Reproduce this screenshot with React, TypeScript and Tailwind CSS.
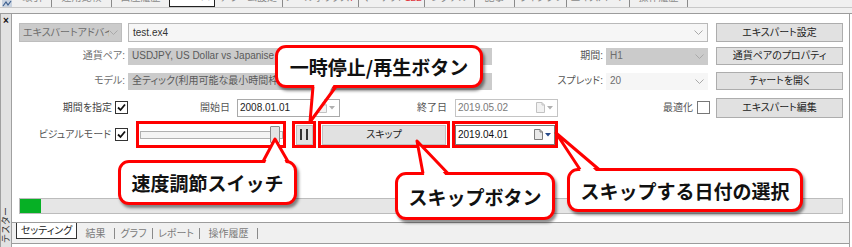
import React from 'react';

const Chevron = () => (
  <svg width="9" height="5" viewBox="0 0 9 5" className="shrink-0">
    <polyline points="0.5,0.5 4.5,4.5 8.5,0.5" fill="none" stroke="#a9a9a9" strokeWidth="1" />
  </svg>
);

const Check = ({ on }: { on: boolean }) => (
  <div className="w-[13px] h-[13px] shrink-0 border border-[#333] bg-white flex items-center justify-center">
    {on && (
      <svg width="9" height="9" viewBox="0 0 9 9">
        <path d="M1 4.5 L3.5 7 L8 1.5" fill="none" stroke="#111" strokeWidth="1.8" />
      </svg>
    )}
  </div>
);

const Calendar = ({ active }: { active: boolean }) => (
  <div className="flex items-center gap-[2px] shrink-0">
    <svg width="9" height="11" viewBox="0 0 9 11">
      <path
        d="M0.5 0.5 H6 L8.5 3 V10.5 H0.5 Z"
        fill={active ? '#e9e9e9' : '#f2f2f2'}
        stroke={active ? '#7d7d7d' : '#c2c2c2'}
      />
      <path d="M6 0.5 V3 H8.5" fill="none" stroke={active ? '#7d7d7d' : '#c2c2c2'} />
    </svg>
    <svg width="6" height="4" viewBox="0 0 6 4">
      <path d="M0 0 H6 L3 3.5 Z" fill={active ? '#274a8a' : '#b0b0b0'} />
    </svg>
  </div>
);

const Btn = ({ label, h }: { label: string; h: string }) => (
  <div className={`ml-[8px] w-[127px] ${h} shrink-0 bg-[#e1e1e1] border border-[#adadad] flex items-center justify-center text-[#222]`}>
    {label}
  </div>
);

const topTabs = [
  { label: '取引', w: 'w-[38px]', sep: true },
  { label: '運用比較', w: 'w-[60px]', sep: true },
  { label: '口座履歴', w: 'w-[57px]', sep: false },
  { label: 'ニュース', w: 'w-[46px]', sep: false, active: true },
  { label: 'アラーム設定', w: 'w-[68px]', sep: true },
  { label: 'メールボックス', w: 'w-[76px]', sep: true, badge: '7' },
  { label: 'マーケット', w: 'w-[66px]', sep: true, badge: '122' },
  { label: 'シグナル', w: 'w-[50px]', sep: true },
  { label: '記事', w: 'w-[40px]', sep: true },
  { label: 'ライブラリ', w: 'w-[52px]', sep: true },
  { label: 'エキスパート', w: 'w-[63px]', sep: true },
  { label: '操作履歴', w: 'w-[58px]', sep: true },
];

const bottomTabs = [
  { label: '結果', w: 'w-[38px]' },
  { label: 'グラフ', w: 'w-[38px]' },
  { label: 'レポート', w: 'w-[47px]' },
  { label: '操作履歴', w: 'w-[58px]' },
];

type P = [number, number];
const tails: { l: P; t: P; r: P; dy: number }[] = [
  { l: [313, 86.5], t: [310, 122], r: [336, 86.5], dy: -3 },
  { l: [263, 161.5], t: [275, 139], r: [288, 161.5], dy: 3 },
  { l: [423, 173.5], t: [417, 141], r: [448, 173.5], dy: 3 },
  { l: [580, 169.5], t: [556, 133], r: [599, 169.5], dy: 3 },
];

const callout =
  "absolute rounded-[11px] border-[3px] border-[#ff0000] bg-white shadow-[2px_3px_3px_rgba(0,0,0,0.45)] flex items-center justify-center text-[19px] font-bold text-[#111] font-['Noto_Sans_CJK_JP',sans-serif] [font-feature-settings:normal] whitespace-nowrap";

export default function App() {
  return (
    <div className="relative w-[852px] h-[247px] overflow-hidden bg-white text-[10px] leading-none text-[#333] font-['Liberation_Sans','Noto_Sans_CJK_JP',sans-serif] [font-feature-settings:'palt']">
      {/* terminal tabs above, cut off */}
      <div className="h-[14px] bg-[#f0f0f0] border-b border-[#9c9c9c]">
        <div className="h-[8px] flex items-end overflow-hidden border-b border-[#c8c8c8]">
          <div className="w-[14px] h-[8px] flex items-end pl-[2px]">
            <svg width="10" height="7" viewBox="0 0 10 7">
              <rect x="0" y="0" width="10" height="7" fill="#c9d3e0" />
              <polyline points="1,6 4,2 6,5 9,1" fill="none" stroke="#3d5f8f" strokeWidth="1.2" />
            </svg>
          </div>
          {topTabs.map((t) => (
            <div
              key={t.label}
              className={`${t.w} h-[8px] shrink-0 flex items-end justify-center overflow-hidden ${
                t.active ? 'bg-white border-x border-b border-[#222] text-[#222]' : t.sep ? 'border-r border-[#8a8a8a] text-[#8a8a8a]' : 'text-[#8a8a8a]'
              }`}
            >
              <span className="whitespace-nowrap leading-[10px] mb-[4px]">
                {t.label}
                {t.badge && <span className="text-[#e0303a]">{t.badge}</span>}
              </span>
            </div>
          ))}
        </div>
      </div>

      <div className="flex h-[233px]">
        {/* side bar */}
        <div className="w-[12px] shrink-0 bg-[#e2e2e2] border-x border-[#a0a0a0] flex flex-col items-center justify-between">
          <span className="mt-[2px] text-[10px] font-bold text-[#111]">×</span>
          <span className="mb-[4px] text-[9px] text-[#333] [writing-mode:vertical-rl] [text-orientation:sideways] rotate-180 [font-feature-settings:normal]">
            テスター
          </span>
        </div>

        <div className="flex-1 mr-[2px] border-r border-[#a0a0a0] flex flex-col pt-[8px]">
          {/* row 1 */}
          <div className="h-[21px] flex items-center">
            <div className="ml-[7px] w-[103px] h-[19px] shrink-0 bg-[#cbcbcb] border border-[#bdbdbd] flex items-center justify-between pl-[3px] pr-[3px] text-[#6d6d6d] overflow-hidden">
              <span className="whitespace-nowrap overflow-hidden w-[86px]">エキスパートアドバイザ</span>
              <Chevron />
            </div>
            <div className="ml-[6px] w-[580px] h-[19px] shrink-0 bg-[#f6f6f6] border border-[#b9b9b9] flex items-center justify-between px-[4px] text-[#333]">
              <span>test.ex4</span>
              <Chevron />
            </div>
            <Btn label="エキスパート設定" h="h-[19px]" />
          </div>

          {/* row 2 */}
          <div className="mt-[3px] h-[20px] flex items-center">
            <div className="w-[116px] shrink-0 text-right pr-[3px] text-[#6d6d6d]">通貨ペア:</div>
            <div className="w-[364px] h-[17px] shrink-0 bg-[#cbcbcb] flex items-center px-[4px] text-[#5a5a5a] whitespace-nowrap overflow-hidden">
              USDJPY, US Dollar vs Japanise Yen
            </div>
            <div className="w-[114px] shrink-0 text-right pr-[3px] text-[#555]">期間:</div>
            <div className="w-[102px] h-[17px] shrink-0 bg-[#cbcbcb] flex items-center justify-between px-[4px] text-[#6d6d6d]">
              <span>H1</span>
              <Chevron />
            </div>
            <Btn label="通貨ペアのプロパティ" h="h-[18px]" />
          </div>

          {/* row 3 */}
          <div className="mt-[5px] h-[20px] flex items-center">
            <div className="w-[116px] shrink-0 text-right pr-[3px] text-[#6d6d6d]">モデル:</div>
            <div className="w-[364px] h-[17px] shrink-0 bg-[#cbcbcb] flex items-center px-[4px] text-[#5a5a5a] whitespace-nowrap overflow-hidden">
              全ティック(利用可能な最小時間枠を使った最も正確な方法)
            </div>
            <div className="w-[114px] shrink-0 text-right pr-[3px] text-[#555]">スプレッド:</div>
            <div className="w-[102px] h-[17px] shrink-0 bg-[#f6f6f6] flex items-center justify-between px-[4px] text-[#6d6d6d]">
              <span>20</span>
              <Chevron />
            </div>
            <Btn label="チャートを開く" h="h-[18px]" />
          </div>

          {/* row 4 */}
          <div className="mt-[6px] h-[21px] flex items-center">
            <div className="w-[103px] shrink-0 text-right pr-[3px] text-[#444]">期間を指定</div>
            <Check on />
            <div className="w-[109px] shrink-0 text-right pr-[7px] text-[#555]">開始日</div>
            <div className="w-[103px] h-[18px] shrink-0 bg-white border border-[#a9a9a9] flex items-center justify-between pl-[2px] pr-[4px] text-[#222]">
              <span>2008.01.01</span>
              <Calendar active={false} />
            </div>
            <div className="w-[115px] shrink-0 text-right pr-[8px] text-[#555]">終了日</div>
            <div className="w-[103px] h-[18px] shrink-0 bg-white border border-[#c4c4c4] flex items-center justify-between pl-[2px] pr-[4px] text-[#7a7a7a]">
              <span>2019.05.02</span>
              <Calendar active={false} />
            </div>
            <div className="w-[139px] shrink-0 text-right pr-[4px] text-[#555]">最適化</div>
            <div className="w-[13px] h-[13px] shrink-0 border border-[#777] bg-white" />
            <div className="ml-[6px] w-[127px] h-[20px] shrink-0 bg-[#e1e1e1] border border-[#adadad] flex items-center justify-center text-[#222]">
              エキスパート編集
            </div>
          </div>

          {/* row 5 */}
          <div className="mt-[2px] h-[29px] flex items-center">
            <div className="w-[101px] shrink-0 text-right pr-[2px] text-[#555]">ビジュアルモード</div>
            <div className="ml-[2px]">
              <Check on />
            </div>
            <div className="ml-[8px] w-[150px] h-[27px] shrink-0 border-[3px] border-[#ff0000] flex items-center pl-[1px]">
              <div className="w-[130px] h-[8px] border-y border-l border-[#b0b0b0] bg-[#f4f4f4]" />
              <div className="w-[10px] h-[17px] bg-[#e4e4e4] border border-[#8a8a8a] rounded-[1px]" />
              <div className="w-[3px] h-[8px] border-y border-r border-[#b0b0b0] bg-[#f4f4f4]" />
            </div>
            <div className="ml-[6px] w-[24px] h-[27px] shrink-0 border-[3px] border-[#ff0000] flex items-center justify-center">
              <div className="w-[17px] h-[20px] bg-[#e1e1e1] border border-[#c0c0c0] flex items-center justify-center gap-[4px]">
                <div className="w-[2px] h-[11px] bg-[#333]" />
                <div className="w-[2px] h-[11px] bg-[#333]" />
              </div>
            </div>
            <div className="ml-[2px] w-[132px] h-[27px] shrink-0 border-[3px] border-[#ff0000] flex items-center justify-center">
              <div className="w-[124px] h-[20px] bg-[#e1e1e1] border border-[#c0c0c0] flex items-center justify-center text-[#222]">
                スキップ
              </div>
            </div>
            <div className="ml-[2px] w-[106px] h-[27px] shrink-0 border-[3px] border-[#ff0000] flex items-center justify-center">
              <div className="w-[100px] h-[20px] bg-white border border-[#7a7a7a] flex items-center justify-between pl-[2px] pr-[3px] text-[#111]">
                <span>2019.04.01</span>
                <Calendar active />
              </div>
            </div>
          </div>

          {/* progress */}
          <div className="mt-[49px] ml-[7px] w-[824px] h-[16px] shrink-0 border border-[#bcbcbc] bg-[#e6e6e6] flex">
            <div className="w-[21px] h-full bg-[#06b025]" />
          </div>

          {/* bottom tabs */}
          <div className="mt-[8px] h-[22px] shrink-0 bg-[#f0f0f0] border-y border-[#9c9c9c] flex items-start">
            <div className="ml-[4px] w-[61px] h-[16px] bg-white border-x border-b border-[#333] flex items-center justify-center text-[#222]">
              セッティング
            </div>
            {bottomTabs.map((t) => (
              <div
                key={t.label}
                className={`${t.w} h-[11px] mt-[5px] border-r border-[#8a8a8a] flex items-center justify-center text-[#7a7a7a]`}
              >
                {t.label}
              </div>
            ))}
          </div>
        </div>
      </div>

      {/* callouts */}
      <div className={`${callout} left-[275px] top-[45px] w-[208px] h-[43px]`}>一時停止/再生ボタン</div>
      <div className={`${callout} left-[118px] top-[160px] w-[179px] h-[45px]`}>速度調節スイッチ</div>
      <div className={`${callout} left-[395px] top-[172px] w-[160px] h-[48px]`}>スキップボタン</div>
      <div className={`${callout} left-[567px] top-[168px] w-[236px] h-[44px]`}>スキップする日付の選択</div>

      <svg className="absolute inset-0 pointer-events-none" width="852" height="247" viewBox="0 0 852 247">
        {tails.map((tl, i) => (
          <g key={i}>
            <polygon
              points={`${tl.l[0] + 1.5},${tl.l[1] + tl.dy} ${tl.t[0]},${tl.t[1]} ${tl.r[0] - 1.5},${tl.r[1] + tl.dy}`}
              fill="#fff"
            />
            <polyline
              points={`${tl.l[0]},${tl.l[1]} ${tl.t[0]},${tl.t[1]} ${tl.r[0]},${tl.r[1]}`}
              fill="none"
              stroke="#ff0000"
              strokeWidth="3"
              strokeLinejoin="round"
            />
          </g>
        ))}
      </svg>
    </div>
  );
}
